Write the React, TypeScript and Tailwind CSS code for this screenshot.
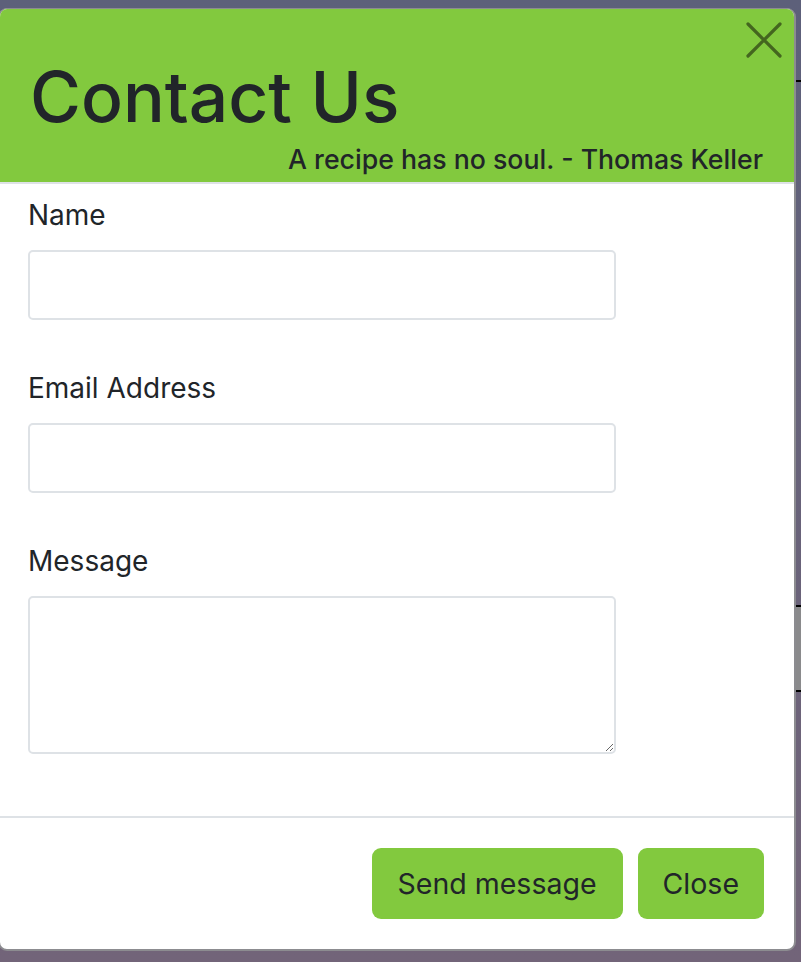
import React from "react";

const fields = [
	{ label: "Name", type: "text" },
	{ label: "Email Address", type: "email" },
];

export default function App() {
	return (
		<div
			className="relative h-[962px] w-[801px] overflow-hidden bg-gradient-to-b from-[#5d607a] to-[#726479]"
			style={{ fontFamily: "Inter, 'Noto Sans', sans-serif" }}
		>
			{/* page behind the backdrop */}
			<div className="flex flex-col items-end pt-[80px]">
				<div className="h-[2px] w-[6px] bg-black" />
				<div className="mt-[523px] h-[87px] w-[6px] border-y-2 border-black bg-[#8a8a8c]" />
			</div>

			{/* modal */}
			<div className="absolute left-[-2px] top-[8px] flex h-[943px] w-[798px] flex-col overflow-hidden rounded-[9px] border-2 border-t border-[#8c8c90] bg-white text-[#212529]">
				<Header />

				<form className="flex flex-1 flex-col pl-[28px] pr-[28px] pt-[10px]">
					{fields.map((f) => (
						<div key={f.label} className="mb-[47px]">
							<label className="mb-[14px] block text-[28px] leading-[42px]">{f.label}</label>
							<input
								type={f.type}
								className="block h-[70px] w-[588px] rounded-[5px] border-2 border-[#dee2e6] bg-white px-[21px] text-[28px] outline-none"
							/>
						</div>
					))}
					<div>
						<label className="mb-[14px] block text-[28px] leading-[42px]">Message</label>
						<textarea className="block h-[158px] w-[588px] rounded-[5px] border-2 border-[#dee2e6] bg-white px-[21px] py-[10px] text-[28px] outline-none" />
					</div>
				</form>

				<div className="flex justify-end gap-[15px] border-t-2 border-[#dee2e6] pb-[30px] pr-[30px] pt-[30px]">
					<button className="h-[71px] rounded-[9px] bg-[#82c93e] px-[26px] text-[28.5px] leading-[42px]">
						Send message
					</button>
					<button className="h-[71px] rounded-[9px] bg-[#82c93e] px-[25px] text-[28.5px] leading-[42px]">
						Close
					</button>
				</div>
			</div>
		</div>
	);
}

function Header() {
	return (
		<div className="relative border-b-2 border-[#dee2e6] bg-[#82c93e] pb-[4px] pl-[30px] pr-[31px] pt-[46px]">
			<button className="absolute right-[12px] top-[13px] h-[36px] w-[36px]" aria-label="Close">
				<svg viewBox="0 0 36 36" className="h-[36px] w-[36px]">
					<path
						d="M2 2 L34 34 M34 2 L2 34"
						stroke="#44661f"
						strokeWidth="3.2"
						strokeLinecap="round"
						fill="none"
					/>
				</svg>
			</button>
			<h1 className="mb-[2px] text-[69.5px] font-medium leading-[84px]">Contact Us</h1>
			<p className="text-right text-[26.7px] font-medium leading-[37px]">
				A recipe has no soul. - Thomas Keller
			</p>
		</div>
	);
}
